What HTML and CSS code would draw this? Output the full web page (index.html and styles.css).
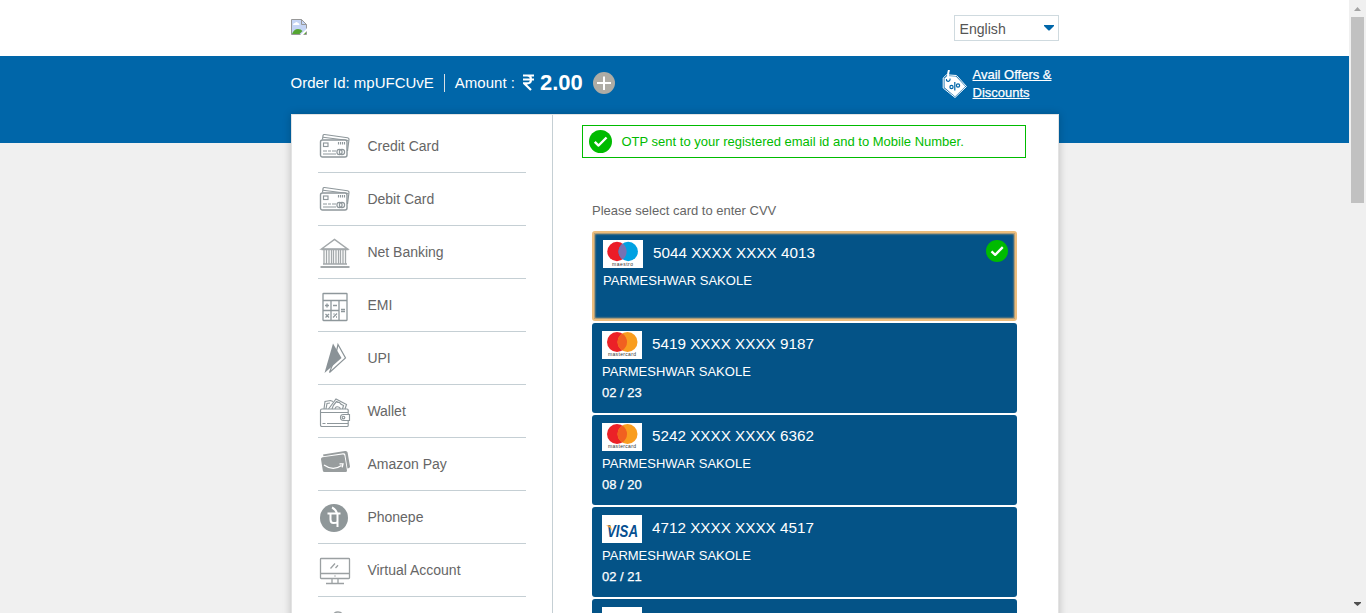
FILE: index.html
```html
<!DOCTYPE html>
<html lang="en">
<head>
<meta charset="utf-8">
<title>Payment</title>
<link rel="stylesheet" href="styles.css">
</head>
<body>
<svg class="defs" width="0" height="0">
  <symbol id="cards" viewBox="0 0 32 32">
    <g fill="none" stroke="#8e979b" stroke-width="1.150">
      <path d="M3.500 9.500 4 5.700Q4.200 4.300 5.500 4.500L28.500 7.700Q30.200 8 30 9.500L28.500 21"/>
      <path d="M4 7.200 29.500 10.500"/>
      <rect x="1.500" y="10" width="26.500" height="17" rx="2" fill="#fff" stroke-width="1.400"/>
      <rect x="4.500" y="13" width="4.500" height="3.500"/>
      <circle cx="20.500" cy="22" r="2.600"/><circle cx="23" cy="22" r="2.600"/>
      <path d="M19.500 12v2.500M21.500 12v2.500M23.500 12v2.500M25.500 12v2.500M4 21h4m1 0h3m1 0h4M4 24h13"/>
    </g>
  </symbol>
  <symbol id="tick" viewBox="0 0 24 24">
    <circle cx="12" cy="12" r="12" fill="#0b0"/>
    <path d="M6 12.400 10 16.200 18.300 7.800" fill="none" stroke="#fff" stroke-width="2.500"/>
  </symbol>
  <symbol id="mastercard" viewBox="0 0 40 28">
    <circle cx="15" cy="11" r="10" fill="#eb2127"/><circle cx="25.500" cy="11" r="10" fill="#f99d1f"/>
    <path d="M20.300 2.500a10 10 0 0 1 0 17 10 10 0 0 1 0-17z" fill="#f16020"/>
    <text x="6" y="25" textLength="28" class="brand">mastercard</text>
  </symbol>
</svg>
<div class="page">
  <main class="main">
    <header class="top">
      <svg class="logo" width="16" height="16" viewBox="0 0 16 16">
        <path d="M.5.500h10l5 5v4.500L9.500 15.500H.5z" fill="#c5d5f5"/>
        <path d="M2 6q0-2 2-2 1.500-2 3 0 1.500 0 1.500 2z" fill="#fff"/>
        <path d="M1 15q2-5 6-5 3 0 4.500 2L8.500 15zM13 15l2-2v2z" fill="#55a532"/>
        <path d="M9.500 15.500H.5V.500h10l5 5v4M10.500.500v5h5M12.500 15.500h3v-3" fill="none" stroke="#989898"/>
      </svg>
      <div class="lang"><span>English</span><svg width="10" height="6"><path d="M0 0h10v1L5.500 5.500h-1L0 1z" fill="#0066a9"/></svg></div>
    </header>
    <section class="band">
      <div class="order">
        <span>Order Id: mpUFCUvE</span><i class="sep"></i><span class="amount-label">Amount :</span>
        <svg class="rupee" width="11" height="17" viewBox="0 0 11 17"><path d="M0 1.500h11M0 5.500h11M0 1.500h4q4 0 4 4t-4 3.800H1L8 16" fill="none" stroke="#fff" stroke-width="2.200"/></svg>
        <b>2.00</b>
        <svg class="plus" width="22" height="22"><circle cx="11" cy="11" r="11" fill="#aeaca5"/><path d="M11 4.500v13.500M4 11h14" stroke="#fff" stroke-width="2"/></svg>
      </div>
      <div class="offers">
        <svg width="26" height="29" viewBox="0 0 26 29">
          <path d="M1.200 8 4.500 4.800 14.500 5.500 24.500 16.500 13 27.500 1.200 18z" fill="#0066a9" stroke="#fff" stroke-width="1" stroke-linejoin="round"/>
          <path d="M2.500 8.500 5 6 14 6.500 23.400 16.500 13 26.500 2.500 17.500z" fill="#fff"/>
          <path d="M4.500 9v1.500q2 2 3.500-.5V8.500" fill="none" stroke="#0066a9" stroke-width="1.100"/>
          <path d="M7 0Q5.500 4.500 6.500 8.500" fill="none" stroke="#fff" stroke-width="2"/>
          <g fill="none" stroke="#0066a9" stroke-width="1.200"><circle cx="9.500" cy="17" r="1.600"/><circle cx="16" cy="15.500" r="1.600"/><path d="M12.800 12v8.500"/></g>
        </svg>
        <a>Avail Offers &amp;<br>Discounts</a>
      </div>
    </section>
    <section class="panel">
      <nav class="menu">
        <div class="item"><svg><use href="#cards"/></svg><span>Credit Card</span></div>
        <div class="item"><svg><use href="#cards"/></svg><span>Debit Card</span></div>
        <div class="item low"><svg viewBox="0 0 32 32"><g fill="none" stroke="#a3a8aa">
          <path d="M2.500 12 15.500 2.500 28.500 12z" stroke-width="1.500"/><path d="M2.500 12.500h27M4 27h24" stroke-width="1.600"/><path d="M1.500 30h29" stroke-width="2"/>
          <path d="M5 13v14M7.500 13v14M10 13v14M12.500 13v14M14.500 13v14M17 13v14M19.500 13v14M21.500 13v14M24 13v14M26.500 13v14" stroke-width="1.300"/></g></svg><span>Net Banking</span></div>
        <div class="item low"><svg viewBox="0 0 32 32"><g fill="none" stroke="#8e979b" stroke-width="1.300">
          <rect x="4" y="3.500" width="24" height="27" rx=".5"/><path d="M4 10.500h24M12 10.500v20M20 10.500v20M4 20.500h16"/>
          <path d="M6 15.500h4M8 13.500v4M14 15.500h4M22 19.500h4M22 21.500h4M6.500 24l3.500 3.500m0-3.500L6.500 27.500M18 23.500l-4 4M14.500 24h1M17 27h1"/></g></svg><span>EMI</span></div>
        <div class="item"><svg viewBox="0 0 32 32"><path d="M19 2.500 26.500 16 10.500 30.500 16 16z" fill="#fff" stroke="#8b9397" stroke-width="1.200"/><path d="M14 1.500 22.500 16 5.500 31z" fill="#8a9297"/></svg><span>UPI</span></div>
        <div class="item low"><svg viewBox="0 0 32 32"><g fill="none" stroke="#8e979b" stroke-width="1.150">
          <path d="M5 13 6 5.500 11.500 4.500 14 5.500M7 13 8 7.500 11 7M9.500 13 17 3 27.500 8.500 26 13M13 13q1-4 4.500-7.500 1 1 3 1 1 2 4 3l-1 3.500M16 13q.5-3 3.500-2 2 .5 1.500 2"/>
          <path d="M3 13h25q1.200 0 1.200 1v15.500q0 1-1 1H3q-1.500 0-1.500-1.500V14.500Q1.500 13 3 13zM1.500 16.500h27.500M3.500 27.500h3m1.500 0h21"/>
          <path d="M30.500 18.500h-6q-3 0-3 2.800 0 3.200 3 3.200h6z" fill="#fff"/><circle cx="24.500" cy="21.500" r="1.300"/></g></svg><span>Wallet</span></div>
        <div class="item"><svg viewBox="0 0 32 32"><g fill="#989d9e"><path d="M4 6.500 26 3q2.300-.3 2.600 1.500l2.400 14q.2 1.300-1.500 1.800l-1 .2L26.300 6.500Q26 5 24 5.300L4.500 8.300z"/><path d="M3.500 9.300 23.500 6.500q1.800-.2 2 1.300L28 22.500q.1 1.500-1.500 1.500H5.500Q4 24 3.800 22.500L2 11.300Q1.800 9.600 3.500 9.300z"/></g><path d="M5 17q9 6.500 17.500.5M20.500 15.800h3.500l-.8 3.500" fill="none" stroke="#fff" stroke-width="1.300"/></svg><span>Amazon Pay</span></div>
        <div class="item"><svg viewBox="0 0 32 32"><circle cx="15" cy="17" r="14" fill="#8f9799"/><g fill="none" stroke="#fff" stroke-width="2"><path d="M8.500 12.500h13M11.500 12.500v6q0 3.500 3 3.500 2.500 0 4-1M18.500 12.500V26M13 6.500q3.500 1.500 5 5.500"/></g></svg><span>Phonepe</span></div>
        <div class="item"><svg viewBox="0 1 32 32"><g fill="none" stroke="#9ba0a2"><rect x="1.500" y="5.500" width="29" height="20" rx=".8" stroke-width="1.300"/><path d="M1.500 20.500h29M13 26v4M19 26v4M7 30.500h18M15.500 23h1M11.500 15.500l4.500-5M16.500 15l2.500-2.800" stroke-width="1.300"/></g></svg><span>Virtual Account</span></div>
        <div class="item"><svg viewBox="0 0 32 32"><path d="M14.500 9q0-4 4.500-4t4.500 4v4h-9z" fill="none" stroke="#9ba0a2" stroke-width="1.300"/></svg></div>
      </nav>
      <div class="content">
        <div class="notice"><svg width="23" height="23"><use href="#tick"/></svg><span>OTP sent to your registered email id and to Mobile Number.</span></div>
        <p class="prompt">Please select card to enter CVV</p>
        <div class="card selected">
          <div class="row"><svg class="scheme" viewBox="0 0 40 28"><circle cx="14" cy="11.500" r="9.700" fill="#eb1c28"/><circle cx="25.200" cy="11.500" r="9.700" fill="#00a1e2"/><path d="M19.600 3.600a9.700 9.700 0 0 1 0 15.800 9.700 9.700 0 0 1 0-15.800z" fill="#7772b3"/><text x="9" y="26" textLength="21" class="brand">maestro</text></svg><span class="num">5044 XXXX XXXX 4013</span><svg class="chosen" width="22" height="22" viewBox="0 0 24 24"><use href="#tick"/></svg></div>
          <div class="name">PARMESHWAR SAKOLE</div>
        </div>
        <div class="card"><div class="row"><svg class="scheme"><use href="#mastercard"/></svg><span class="num">5419 XXXX XXXX 9187</span></div><div class="name">PARMESHWAR SAKOLE</div><div class="date">02 / 23</div></div>
        <div class="card"><div class="row"><svg class="scheme"><use href="#mastercard"/></svg><span class="num">5242 XXXX XXXX 6362</span></div><div class="name">PARMESHWAR SAKOLE</div><div class="date">08 / 20</div></div>
        <div class="card"><div class="row"><svg class="scheme" viewBox="0 0 40 28"><text x="5" y="22" textLength="31" lengthAdjust="spacingAndGlyphs" class="visa">VISA</text><path d="M4 10.500h4.500l2 6q-2-4.500-6.500-6z" fill="#f7a12b"/></svg><span class="num">4712 XXXX XXXX 4517</span></div><div class="name">PARMESHWAR SAKOLE</div><div class="date">02 / 21</div></div>
        <div class="card"><div class="row"><svg class="scheme"></svg></div></div>
      </div>
    </section>
  </main>
  <aside class="scroll">
    <svg width="17" height="17"><path d="M5 11h7L8.500 7z" fill="#a3a3a3"/></svg>
    <div class="thumb"></div>
    <svg class="down" width="17" height="17"><path d="M5 6h7v1L8.500 10 5 7z" fill="#505050"/></svg>
  </aside>
</div>
</body>
</html>
```
FILE: styles.css
```css
* { box-sizing: border-box; }
body { margin: 0; font-family: "Liberation Sans", Arial, sans-serif; background: #f0f0f0; }
svg { flex: none; display: block; }
.defs { display: none; }
.page { display: flex; height: 613px; overflow: hidden; }
.main { width: 1349px; height: 613px; overflow: hidden; }
.top { height: 56px; background: #fff; padding: 15px 290px 0 291px; display: flex; justify-content: space-between; align-items: flex-start; }
.logo { margin-top: 4px; }
.lang { width: 105px; height: 26px; border: 1px solid #cfdadf; display: flex; align-items: center; justify-content: space-between; padding: 2px 4px 0 4.500px; font-size: 14.100px; color: #555; }
.lang svg { margin-top: -3px; }
.band { height: 87px; background: #0066a9; padding: 0 290.500px 0 290.500px; display: flex; justify-content: space-between; color: #fff; }
.order { display: flex; align-items: center; height: 53px; font-size: 15px; white-space: nowrap; }
.sep { width: 1px; height: 18px; background: #d8dfe4; margin: 0 10px; }
.rupee { margin: 0 6px 0 8px; }
.order b { font-size: 22px; line-height: 24px; }
.plus { margin-left: 10px; }
.offers { display: flex; width: 117px; padding-top: 10px; font-size: 13px; line-height: 18px; white-space: nowrap; }
.offers svg { margin: 4px 5px 0 0; }
.offers a { text-decoration: underline; text-underline-offset: 1px; -webkit-text-stroke: .25px #fff; }
.panel { width: 768px; height: 560px; margin: -29px 0 0 291px; position: relative; background: #fff; border: 1px solid #e3e3e3; border-bottom: 0; box-shadow: 0 0 8px rgba(0,0,0,.22); display: flex; }
.menu { width: 261px; border-right: 1px solid #c5cfd4; padding: 5px 26px 0 26px; }
.item { height: 53px; border-bottom: 1px solid #c5cfd4; display: flex; align-items: center; padding-left: 1px; font-size: 14px; color: #666; }
.item svg { width: 32px; height: 32px; margin-right: 16.400px; }
.item.low svg { margin-top: 2px; }
.content { padding: 10px 0 0 29px; width: 505px; }
.notice { width: 444px; height: 33px; border: 1px solid #0b0; display: flex; align-items: center; padding-left: 6px; font-size: 13px; color: #0b0; white-space: nowrap; }
.notice svg { margin-right: 9.500px; }
.notice use, .chosen use { stroke-linejoin: round; }
.prompt { margin: 44px 0 12px 10px; font-size: 13px; line-height: 17px; color: #666; }
.card { width: 425px; height: 90px; margin: 0 0 2px 10px; border-radius: 3px; background: #045387; color: #fff; padding: 8px 10px; }
.card.selected { border: 2px solid #edbd7c; box-shadow: inset 0 0 2px 1px #e5b577; padding: 7px 7px 6px 9px; }
.row { display: flex; height: 28px; }
.scheme { width: 40px; height: 28px; background: #fff; margin-right: 10px; }
.num { font-size: 15.250px; line-height: 26px; }
.chosen { margin-left: auto; }
.name, .date { font-size: 13px; line-height: 17px; }
.name { margin-top: 4px; }
.date { margin-top: 4px; -webkit-text-stroke: .25px #fff; }
.brand { font-size: 5px; fill: #333; }
.visa { font-size: 17px; font-weight: bold; font-style: italic; fill: #064f91; }
.scroll { width: 17px; height: 613px; background: #f0f0f0; display: flex; flex-direction: column; }
.thumb { width: 13px; height: 186px; background: #c1c1c1; margin-left: 2px; }
.down { margin-top: auto; }
```
